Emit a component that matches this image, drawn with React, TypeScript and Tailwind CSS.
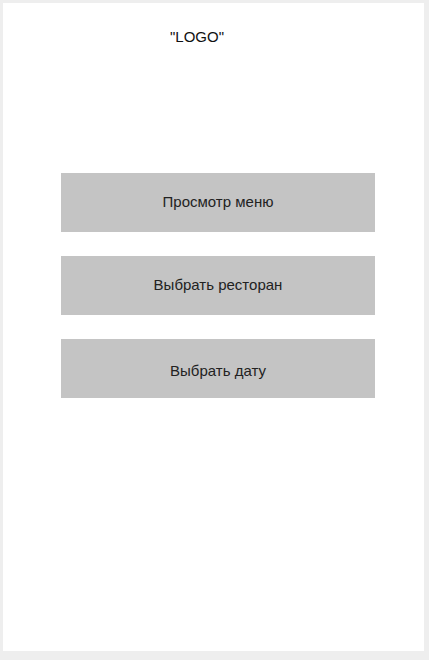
export default function App() {
  const font = { fontFamily: '"Liberation Sans", Arial, sans-serif' };
  return (
    <div className="w-[429px] h-[660px] bg-[#eeeeee] pt-[3px] pl-[3px] pr-[5px] pb-[9px]" style={font}>
      <div className="h-full bg-white flex flex-col">
        <div className="pt-[25px] pl-[167px] text-[15px] leading-[18px] text-[#111]">"LOGO"</div>
        <div className="mt-[127px] ml-[58px] w-[314px] flex flex-col gap-[24px]">
          <button className="h-[59px] bg-[#c4c4c4] text-[15px] text-[#222] flex items-center justify-center">Просмотр меню</button>
          <button className="h-[59px] bg-[#c4c4c4] text-[15px] text-[#222] flex items-center justify-center">Выбрать ресторан</button>
          <button className="h-[59px] bg-[#c4c4c4] text-[15px] text-[#222] flex items-center justify-center pt-[5px]">Выбрать дату</button>
        </div>
      </div>
    </div>
  );
}
